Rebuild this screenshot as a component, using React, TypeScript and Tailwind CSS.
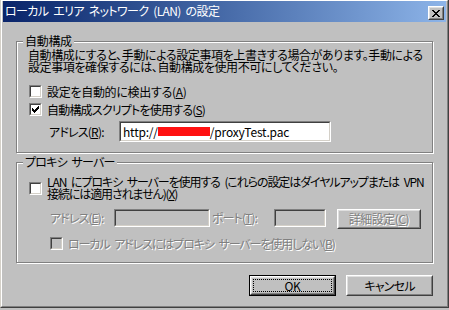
import React from 'react';

const FONT = "font-['Noto_Sans_CJK_JP','Noto_Sans_CJK_SC',sans-serif] [font-feature-settings:'palt']";
const DIM = "text-[#808080] [text-shadow:1px_1px_0_#fff]";

const CHECK = ['......x', '.....xx', 'x...xxx', 'xx.xxx.', 'xxxxx..', '.xxx...', '..x....'];
const CLOSE = ['xx....xx', '.xx..xx.', '..xxxx..', '...xx...', '..xxxx..', '.xx..xx.', 'xx....xx'];

// a word gap kept wide even where the label's letters are squeezed
const Sp = () => <span className="tracking-[2px]">{' '}</span>;

const Pixels = ({ rows, color = '#000' }: { rows: string[]; color?: string }) => (
    <svg width={rows[0].length} height={rows.length} shapeRendering="crispEdges">
        {rows.flatMap((r, y) =>
            r.split('').map((c, x) =>
                c === 'x' ? <rect key={`${x}-${y}`} x={x} y={y} width={1} height={1} fill={color} /> : null
            )
        )}
    </svg>
);

const Check = ({ checked = false, disabled = false }: { checked?: boolean; disabled?: boolean }) => (
    <div className="w-[13px] h-[13px] shrink-0 flex border border-t-[#808080] border-l-[#808080] border-r-white border-b-white">
        <div className={`flex-1 flex items-center justify-center border border-t-[#404040] border-l-[#404040] border-r-[#d4d0c8] border-b-[#d4d0c8] ${disabled ? 'bg-[#c0c0c0]' : 'bg-white'}`}>
            {checked && <Pixels rows={CHECK} />}
        </div>
    </div>
);

const Field = ({ className, disabled = false, children }: { className: string; disabled?: boolean; children?: React.ReactNode }) => (
    <div className={`shrink-0 flex border border-t-[#808080] border-l-[#808080] border-r-white border-b-white ${className}`}>
        <div className={`flex-1 flex items-center pl-[2px] whitespace-nowrap overflow-hidden border border-t-[#404040] border-l-[#404040] border-r-[#d4d0c8] border-b-[#d4d0c8] ${disabled ? 'bg-[#c0c0c0]' : 'bg-white'}`}>
            {children}
        </div>
    </div>
);

const Raised = ({ className, children }: { className: string; children?: React.ReactNode }) => (
    <div className={`shrink-0 flex border border-t-white border-l-white border-r-[#404040] border-b-[#404040] ${className}`}>
        <div className="flex-1 flex items-center justify-center border border-t-[#dfdfdf] border-l-[#dfdfdf] border-r-[#808080] border-b-[#808080] bg-[#c0c0c0]">
            {children}
        </div>
    </div>
);

export default function App() {
    return (
        <div className={`w-[449px] h-[310px] bg-[#c0c0c0] overflow-hidden text-[12px] leading-[12px] tracking-[-0.3px] text-black ${FONT}`}>
            <div className="w-[449px] h-[308px] flex flex-col border-l border-r border-b border-l-[#d4d0c8] border-r-[#404040] border-b-[#404040]">
                <div className="flex-1 flex flex-col px-[1px] border-l border-t border-r border-b border-l-white border-t-white border-r-[#808080] border-b-[#808080]">

                    {/* Title bar */}
                    <div className="h-[21px] flex items-start justify-between pl-[2px] pr-[2px] bg-linear-to-r from-[#0a246a] to-[#8db4e8] text-white">
                        <span className="mt-[4px] whitespace-nowrap tracking-[-0.6px]">ローカル<Sp />エリア<Sp />ネットワーク<Sp />(LAN)<Sp />の設定</span>
                        <Raised className="w-[16px] h-[14px] mt-[5px]">
                            <Pixels rows={CLOSE} />
                        </Raised>
                    </div>

                    <div className="flex flex-col px-[13px]">
                        {/* 自動構成 */}
                        <div className="relative mt-[19px] h-[112px] flex flex-col pl-[11px] pt-[7px] border border-[#808080] shadow-[inset_1px_1px_0_#fff,1px_1px_0_#fff]">
                            <span className="absolute left-[6px] -top-[7px] px-[2px] bg-[#c0c0c0] whitespace-nowrap">自動構成</span>
                            <p className="whitespace-nowrap tracking-[-0.4px]">
                                自動構成にすると、手動による設定事項を上書きする場合があります。手動による<br />
                                設定事項を確保するには、自動構成を使用不可にしてください。
                            </p>
                            <div className="mt-[12px] h-[13px] flex items-center">
                                <div className="ml-[1px]"><Check /></div>
                                <span className="ml-[5px] whitespace-nowrap">設定を自動的に検出する(<u>A</u>)</span>
                            </div>
                            <div className="mt-[5px] h-[13px] flex items-center">
                                <div className="ml-[1px]"><Check checked /></div>
                                <span className="ml-[5px] whitespace-nowrap tracking-[-0.8px]">自動構成スクリプトを使用する(<u>S</u>)</span>
                            </div>
                            <div className="mt-[5px] h-[21px] flex items-center">
                                <span className="ml-[21px] w-[70px] whitespace-nowrap tracking-[-0.8px]">アドレス(<u>R</u>):</span>
                                <Field className="w-[212px] h-[21px]">
                                    <span className="tracking-[-0.2px]">http://</span>
                                    <span className="inline-block w-[52px] h-[9px] bg-[#ff1010]" />
                                    <span className="tracking-[-0.2px]">/proxyTest.pac</span>
                                </Field>
                            </div>
                        </div>

                        {/* プロキシ サーバー */}
                        <div className="relative mt-[9px] h-[101px] flex flex-col pl-[11px] pt-[13px] border border-[#808080] shadow-[inset_1px_1px_0_#fff,1px_1px_0_#fff]">
                            <span className="absolute left-[6px] -top-[7px] px-[2px] bg-[#c0c0c0] whitespace-nowrap tracking-[-0.8px]">プロキシ<Sp />サーバー</span>
                            <div className="h-[24px] flex items-center">
                                <div className="ml-[1px]"><Check /></div>
                                <span className="ml-[5px] whitespace-nowrap tracking-[-1.1px]">
                                    LAN<Sp />にプロキシ<Sp />サーバーを使用する<Sp />(これらの設定はダイヤルアップまたは<Sp />VPN<br />
                                    接続には適用されません)(<u>X</u>)
                                </span>
                            </div>
                            <div className={`mt-[9px] h-[20px] flex items-start tracking-[-0.9px] ${DIM}`}>
                                <span className="ml-[22px] w-[64px] leading-[18px] whitespace-nowrap">アドレス(<u>E</u>):</span>
                                <Field className="w-[96px] h-[18px]" disabled />
                                <span className="ml-[2px] w-[62px] leading-[18px] whitespace-nowrap">ポート(<u>T</u>):</span>
                                <Field className="w-[52px] h-[18px]" disabled />
                                <Raised className="ml-[11px] w-[84px] h-[20px]">
                                    <span className="whitespace-nowrap tracking-[-0.5px]">詳細設定(<u>C</u>)</span>
                                </Raised>
                            </div>
                            <div className="mt-[8px] h-[13px] flex items-center">
                                <div className="ml-[22px]"><Check disabled /></div>
                                <span className={`ml-[5px] whitespace-nowrap tracking-[-1.1px] ${DIM}`}>ローカル<Sp />アドレスにはプロキシ<Sp />サーバーを使用しない(<u>B</u>)</span>
                            </div>
                        </div>

                        {/* Buttons */}
                        <div className="mt-[12px] flex justify-end gap-[10px]">
                            <div className="w-[87px] h-[21px] flex border border-black">
                                <Raised className="flex-1">
                                    <div className="w-[calc(100%-2px)] h-[calc(100%-2px)] flex items-center justify-center border border-dotted border-black">
                                        OK
                                    </div>
                                </Raised>
                            </div>
                            <Raised className="w-[87px] h-[21px]">
                                <span className="whitespace-nowrap tracking-[-0.8px]">キャンセル</span>
                            </Raised>
                        </div>
                    </div>
                </div>
            </div>
        </div>
    );
}
